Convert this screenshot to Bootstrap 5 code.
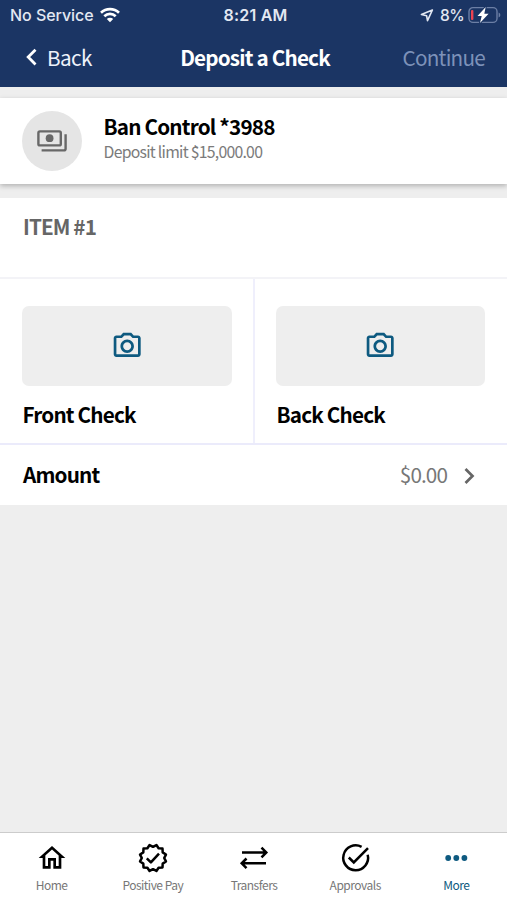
<!DOCTYPE html>
<html lang="en">
<head>
<meta charset="utf-8">
<meta name="viewport" content="width=device-width, initial-scale=1">
<title>Deposit a Check</title>
<link href="https://cdn.jsdelivr.net/npm/bootstrap@5.3.0/dist/css/bootstrap.min.css" rel="stylesheet">
<style>
:root{--navy:#1b3564;--teal:#0e5a80}
body{font-family:"Noto Sans CJK SC","Source Sans Pro",sans-serif;background:#eee;color:#000;font-size:20.7px;line-height:30px;letter-spacing:-.82px}
svg{display:block;flex:none}
.screen{height:900px;overflow:hidden}
.top-area{background:var(--navy);height:87px}
.status-row{height:30px;font-family:Inter,sans-serif;font-size:16px;font-weight:450;letter-spacing:-.05px;color:#e3e8f2;padding:0 6px 0 10px}
.status-row>*,.title-row>*{flex:1 1 0;white-space:nowrap}
.status-row>.clock{font-weight:600;letter-spacing:.2px}
.wifi{margin-left:6px}
.pct{font-size:15.5px;letter-spacing:-.6px;margin:1px 0 0 6px}
.title-row{height:54px;padding:0 22px 0 25px}
.title-row>.page-title{flex:0 0 auto}
.back-link{letter-spacing:-.6px;color:#eef2fa}
.back-link svg{margin:0 8px 1px 0}
.continue-link{letter-spacing:-.75px;color:#7d92b9}
.account{margin-top:11px;height:86px;padding:0 22px;box-shadow:0 2px 5px rgba(0,0,0,.25)}
.avatar-disc{width:60px;height:60px;background:#e5e5e5;margin-right:21.5px}
.account-text{padding-bottom:8px}
.limit-text{font-size:15.8px;line-height:22px;letter-spacing:-.74px;color:#7b7b7b}
.item-head{margin-top:14px;height:81px;padding:13px 23px;color:#666;letter-spacing:-.9px;border-bottom:2px solid #f3f3f7}
.captures{height:166px;border-bottom:2px solid #ebebfb}
.captures>div{padding:27px 22px 0}
.captures>div:first-child{padding-right:21px;border-right:2px solid #efeffc;width:255px}
.captures>div+div{width:252px;padding-left:21px}
.shot{height:80px;background:#eee;border-radius:7px;color:var(--teal);margin-bottom:13px}
.capture-name{padding-left:.5px}
.amount-row{height:60px;padding:0 30px 2px 23px}
.amount-value{color:#777;letter-spacing:-.9px;margin-right:16px}
.tabs{height:68px;border-top:1px solid #ccc;padding:9px 0 0 1px;font-size:12px;line-height:14px;letter-spacing:-.5px;color:#777}
.tabs svg{color:#000;margin-bottom:4px}
.tabs .current,.tabs .current svg{color:var(--teal)}
</style>
</head>
<body>
<div class="screen d-flex flex-column">
  <header class="top-area text-white">
    <div class="status-row d-flex align-items-center">
      <div class="d-flex align-items-center">No Service
        <svg class="wifi" width="20" height="16" viewBox="0 0 20 16" fill="none" stroke="#fff" stroke-width="2.7"><path d="M1 5.8a13 13 0 0 1 18 0M4.3 9.2a8.3 8.3 0 0 1 11.4 0"/><path d="M10 15.2 6.8 12a4.6 4.6 0 0 1 6.4 0z" fill="#fff" stroke="none"/></svg>
      </div>
      <div class="clock text-center">8:21 AM</div>
      <div class="d-flex align-items-center justify-content-end">
        <svg width="14" height="13" viewBox="0 0 14 13" fill="none" stroke="#e3e8f2" stroke-width="1.6" stroke-linejoin="round"><path d="M12.4 1 1.4 5.5l5.2 1.2.9 5z"/></svg>
        <span class="pct">8%</span>
        <svg class="ms-1" width="33" height="18" viewBox="0 0 33 18"><rect x="1" y="1.6" width="28" height="14.8" rx="4" fill="none" stroke="#6c7fa5" stroke-width="1.4"/><path d="M30.6 6.5c2.3.8 2.3 4.2 0 5z" fill="#6c7fa5"/><rect x="3" y="4" width="2.4" height="10" rx="1" fill="#ee4351"/><path d="M17.7 1 9.5 10h4.2L12 17l8.6-9.2h-4.3z" fill="#fff" stroke="#1b3564" stroke-width="2" paint-order="stroke"/></svg>
      </div>
    </div>
    <div class="title-row d-flex align-items-center">
      <div class="back-link d-flex align-items-center"><svg width="14" height="18" viewBox="0 0 14 18" fill="none" stroke="#fff" stroke-width="2.8"><path d="m10.5 1.8-7.3 7.3 7.3 7.3"/></svg>Back</div>
      <div class="page-title fw-bold">Deposit a Check</div>
      <div class="continue-link text-end">Continue</div>
    </div>
  </header>

  <section class="account bg-white d-flex align-items-center">
    <div class="avatar-disc rounded-circle d-flex align-items-center justify-content-center">
      <svg width="30" height="22" viewBox="0 0 30 22" fill="none" stroke="#686868" stroke-width="2.4"><rect x="1.4" y="1.4" width="22.4" height="14" rx="1.5"/><circle cx="12.6" cy="8.2" r="3.9" fill="#686868" stroke="none"/><path d="M28.6 4.2v14.6q0 1.6-1.6 1.6H4.6"/></svg>
    </div>
    <div class="account-text">
      <div class="fw-bold">Ban Control *3988</div>
      <div class="limit-text">Deposit limit $15,000.00</div>
    </div>
  </section>

  <section class="bg-white item-head fw-bold">ITEM #1</section>
  <section class="captures bg-white row g-0">
    <div class="col-auto"><div class="shot d-flex align-items-center justify-content-center"><svg width="32.4" height="32.4" viewBox="0 0 24 24" fill="currentColor"><path d="M20 4h-3.17L15 2H9L7.17 4H4c-1.1 0-2 .9-2 2v12c0 1.1.9 2 2 2h16c1.1 0 2-.9 2-2V6c0-1.1-.9-2-2-2zm0 14H4V6h4.05l1.83-2h4.24l1.83 2H20v12zM12 7c-2.76 0-5 2.24-5 5s2.24 5 5 5 5-2.24 5-5-2.24-5-5-5zm0 8c-1.65 0-3-1.35-3-3s1.35-3 3-3 3 1.35 3 3-1.35 3-3 3z"/></svg></div><div class="capture-name fw-bold">Front Check</div></div>
    <div class="col-auto"><div class="shot d-flex align-items-center justify-content-center"><svg width="32.4" height="32.4" viewBox="0 0 24 24" fill="currentColor"><path d="M20 4h-3.17L15 2H9L7.17 4H4c-1.1 0-2 .9-2 2v12c0 1.1.9 2 2 2h16c1.1 0 2-.9 2-2V6c0-1.1-.9-2-2-2zm0 14H4V6h4.05l1.83-2h4.24l1.83 2H20v12zM12 7c-2.76 0-5 2.24-5 5s2.24 5 5 5 5-2.24 5-5-2.24-5-5-5zm0 8c-1.65 0-3-1.35-3-3s1.35-3 3-3 3 1.35 3 3-1.35 3-3 3z"/></svg></div><div class="capture-name fw-bold">Back Check</div></div>
  </section>
  <section class="amount-row bg-white d-flex align-items-center">
    <div class="fw-bold me-auto">Amount</div>
    <div class="amount-value">$0.00</div>
    <svg class="mt-1" width="14" height="18" viewBox="0 0 14 18" fill="none" stroke="#666" stroke-width="2.7"><path d="m2.5 2 7 7-7 7"/></svg>
  </section>

  <nav class="tabs bg-white mt-auto row g-0 text-center">
    <div class="col d-flex flex-column align-items-center"><svg width="32" height="32" viewBox="0 0 24 24" fill="currentColor"><path d="M12 5.69l5 4.5V18h-2v-6H9v6H7v-7.81l5-4.5M12 3L2 12h3v8h6v-6h2v6h6v-8h3L12 3z"/></svg>Home</div>
    <div class="col d-flex flex-column align-items-center"><svg width="32" height="32" viewBox="-16 -16 32 32" fill="none" stroke="currentColor" stroke-width="2.5" stroke-linejoin="round"><path d="M0-11.2 3.42-12.95 5.6-9.7 9.5-9.5 9.7-5.6 12.95-3.42 11.2 0 12.95 3.42 9.7 5.6 9.5 9.5 5.6 9.7 3.42 12.95 0 11.2-3.42 12.95-5.6 9.7-9.5 9.5-9.7 5.6-12.95 3.42-11.2 0-12.95-3.42-9.7-5.6-9.5-9.5-5.6-9.7-3.42-12.95zM-6.2.3l4.1 4.1L6-4.4"/></svg>Positive Pay</div>
    <div class="col d-flex flex-column align-items-center"><svg width="32" height="32" viewBox="0 0 32 32" fill="none" stroke="currentColor" stroke-width="2.5"><path d="M4 10.5h24M23.5 5.7l4.8 4.8-4.8 4.8M28 21.3H4M8.5 16.5l-4.8 4.8 4.8 4.8"/></svg>Transfers</div>
    <div class="col d-flex flex-column align-items-center"><svg width="32" height="32" viewBox="0 0 32 32" fill="none" stroke="currentColor" stroke-width="2.5"><path d="M22.6 4.9A12.4 12.4 0 1 0 28.7 12.8M9.8 15.5l5 5L29 6.2"/></svg>Approvals</div>
    <div class="current col d-flex flex-column align-items-center"><svg width="32" height="32" viewBox="0 0 32 32" fill="currentColor"><circle cx="8.2" cy="16" r="2.9"/><circle cx="16.3" cy="16" r="2.9"/><circle cx="24.4" cy="16" r="2.9"/></svg>More</div>
  </nav>
</div>
<script src="https://cdn.jsdelivr.net/npm/bootstrap@5.3.0/dist/js/bootstrap.bundle.min.js"></script>
</body>
</html>
